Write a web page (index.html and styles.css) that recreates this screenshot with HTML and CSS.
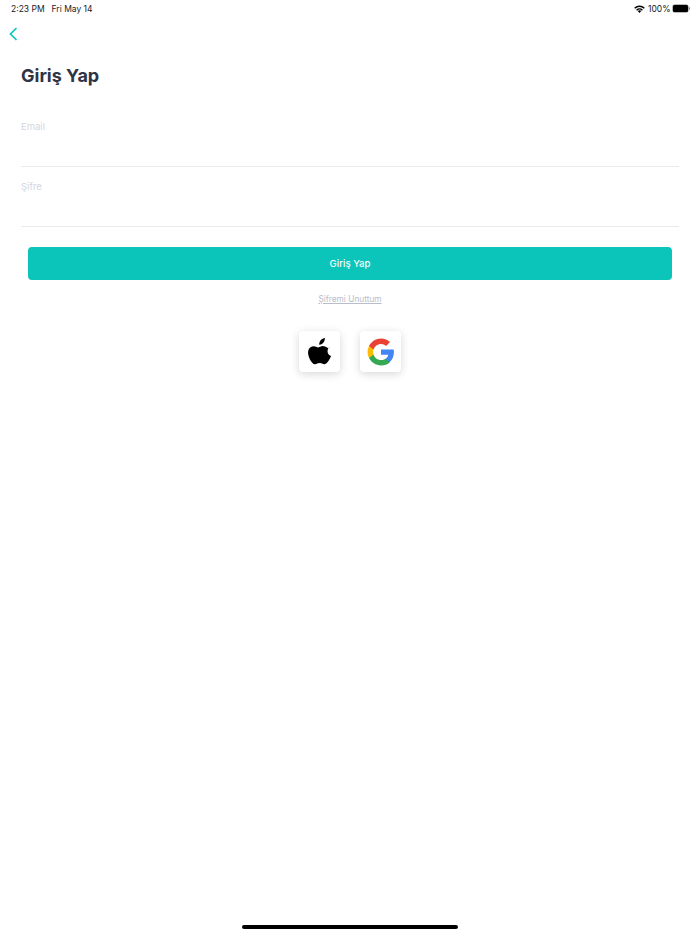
FILE: index.html
```html
<!DOCTYPE html>
<html lang="tr">
<head>
  <meta charset="UTF-8">
  <meta name="viewport" content="width=device-width, initial-scale=1.0">
  <title>Giriş Yap</title>
  <link rel="stylesheet" href="styles.css">
</head>
<body>
  <div class="page">
    <div class="status-bar">
      <div class="status-left">
        <span>2:23 PM</span>
        <span>Fri May 14</span>
      </div>
      <div class="status-right">
        <svg class="wifi" width="11" height="8" viewBox="0 0 11 8">
          <path d="M5.5 8 3.7 6a2.6 2.6 0 0 1 3.6 0z" fill="#000"/>
          <path d="M.2 2.7a7.6 7.6 0 0 1 10.6 0l-1 1.1a6.1 6.1 0 0 0-8.6 0z" fill="#000"/>
          <path d="M2.1 4.7a4.9 4.9 0 0 1 6.8 0l-1 1a3.4 3.4 0 0 0-4.8 0z" fill="#000"/>
        </svg>
        <span>100%</span>
        <div class="battery"></div>
        <div class="battery-cap"></div>
      </div>
    </div>

    <button class="back-btn">
      <svg width="9" height="14" viewBox="0 0 9 14">
        <path d="M7.5 1 1.5 7l6 6" fill="none" stroke="#0bc5ba" stroke-width="1.7"/>
      </svg>
    </button>

    <h1 class="title">Giriş Yap</h1>

    <div class="field">
      <label class="field-label">Email</label>
    </div>
    <div class="field">
      <label class="field-label">Şifre</label>
    </div>

    <button class="submit-btn">Giriş Yap</button>
    <a class="forgot" href="#">Şifremi Unuttum</a>

    <div class="social">
      <div class="social-btn">
        <svg width="23" height="27" viewBox="0 0 24 28">
          <path d="M17.6 0c.2 2-.6 3.6-1.6 4.8-1.1 1.3-2.7 2.2-4.3 2.1-.2-1.8.6-3.5 1.6-4.6C14.500 1 16.200.1 17.600 0z" fill="#000"/>
          <path d="M23.200 9.500c-1.700 1.100-2.800 2.700-2.800 4.800 0 2.500 1.500 4.200 3.600 5.100-.5 1.700-1.300 3.200-2.300 4.700-1.300 1.900-2.600 3.800-4.600 3.800-2 0-2.600-1.200-4.900-1.200-2.300 0-3 1.200-4.800 1.200-2 .1-3.500-2-4.800-3.900C.5 20.200-.9 15.500.9 12.100c1-1.900 2.900-3.100 4.900-3.100 1.900 0 3.700 1.300 4.900 1.300 1.200 0 3-1.500 5.300-1.300 1 0 3.600.4 5.300 2.500z" fill="#000" transform="translate(0 -.6)"/>
        </svg>
      </div>
      <div class="social-btn">
        <svg width="28" height="28" viewBox="0 0 48 48">
          <path d="M46.100 24.500c0-1.600-.1-3.100-.4-4.600H24v8.700h12.400c-.5 2.900-2.100 5.300-4.600 6.900v5.700h7.400c4.400-4 6.900-9.900 6.900-16.700z" fill="#4285f4"/>
          <path d="M24 47c6.200 0 11.400-2 15.200-5.600l-7.400-5.700c-2.100 1.400-4.700 2.200-7.800 2.200-6 0-11-4-12.800-9.500H3.500v5.900C7.300 41.800 15 47 24 47z" fill="#34a853"/>
          <path d="M11.200 28.400c-.5-1.400-.7-2.900-.7-4.400s.3-3 .7-4.400v-5.900H3.500C2 16.800 1 20.300 1 24s.9 7.200 2.500 10.300z" fill="#fbbc05"/>
          <path d="M24 10.100c3.400 0 6.400 1.200 8.800 3.400l6.600-6.600C35.400 3.200 30.200 1 24 1 15 1 7.300 6.200 3.500 13.700l7.700 5.900c1.800-5.500 6.800-9.500 12.800-9.500z" fill="#ea4335"/>
        </svg>
      </div>
    </div>

    <div class="home-bar"></div>
  </div>
</body>
</html>
```

FILE: styles.css
```css
* { box-sizing: border-box; }
html, body { margin: 0; padding: 0; background: #fff; }
body { font-family: Inter, 'Noto Sans', Arial, sans-serif; }
.page { width: 700px; height: 934px; position: relative; overflow: hidden; display: flex; flex-direction: column; padding-top: 2px; }
.status-bar { display: flex; justify-content: space-between; align-items: center; height: 13px; padding: 0 10px 0 11px; font-size: 8.5px; color: #1a1a1a; }
.status-left { display: flex; gap: 7px; }
.status-right { display: flex; align-items: center; gap: 1px; }
.wifi { margin-right: 2px; }
.battery { width: 15px; height: 7px; background: #000; border-radius: 1.5px; box-shadow: 0 0 0 .5px #777; margin-left: 1px; }
.battery-cap { width: 1.5px; height: 3px; background: #888; border-radius: 0 1px 1px 0; }
.back-btn { align-self: flex-start; background: none; border: none; padding: 0; margin: 12px 0 0 9px; height: 14px; line-height: 0; }
.title { margin: 23px 0 0 21px; font-size: 18px; line-height: 24px; font-weight: 700; color: #2f3447; }
.field { margin: 0 21px; height: 60px; border-bottom: 1px solid #e9eaee; }
.title + .field { margin-top: 21px; height: 58px; padding-top: 11.5px; }
.field-label { display: block; font-size: 9.5px; line-height: 12px; color: #d3d5de; }
.field + .field { padding-top: 13.5px; }
.submit-btn { margin: 20px 28px 0; height: 33px; flex: none; background: #0bc5ba; color: #f2fcfb; border: none; border-radius: 4px; font-family: inherit; font-size: 9.6px; font-weight: 500; }
.forgot { align-self: center; margin-top: 13px; font-size: 8.3px; line-height: 12px; color: #b9bcca; }
.social { display: flex; justify-content: center; gap: 20px; margin-top: 26px; }
.social-btn { width: 41px; height: 41px; background: #fff; border-radius: 4px; box-shadow: 0 2px 8px rgba(0,0,0,.16); display: flex; align-items: center; justify-content: center; }
.home-bar { position: absolute; left: 242px; top: 925px; width: 216px; height: 4px; background: #000; border-radius: 2px; }
```
